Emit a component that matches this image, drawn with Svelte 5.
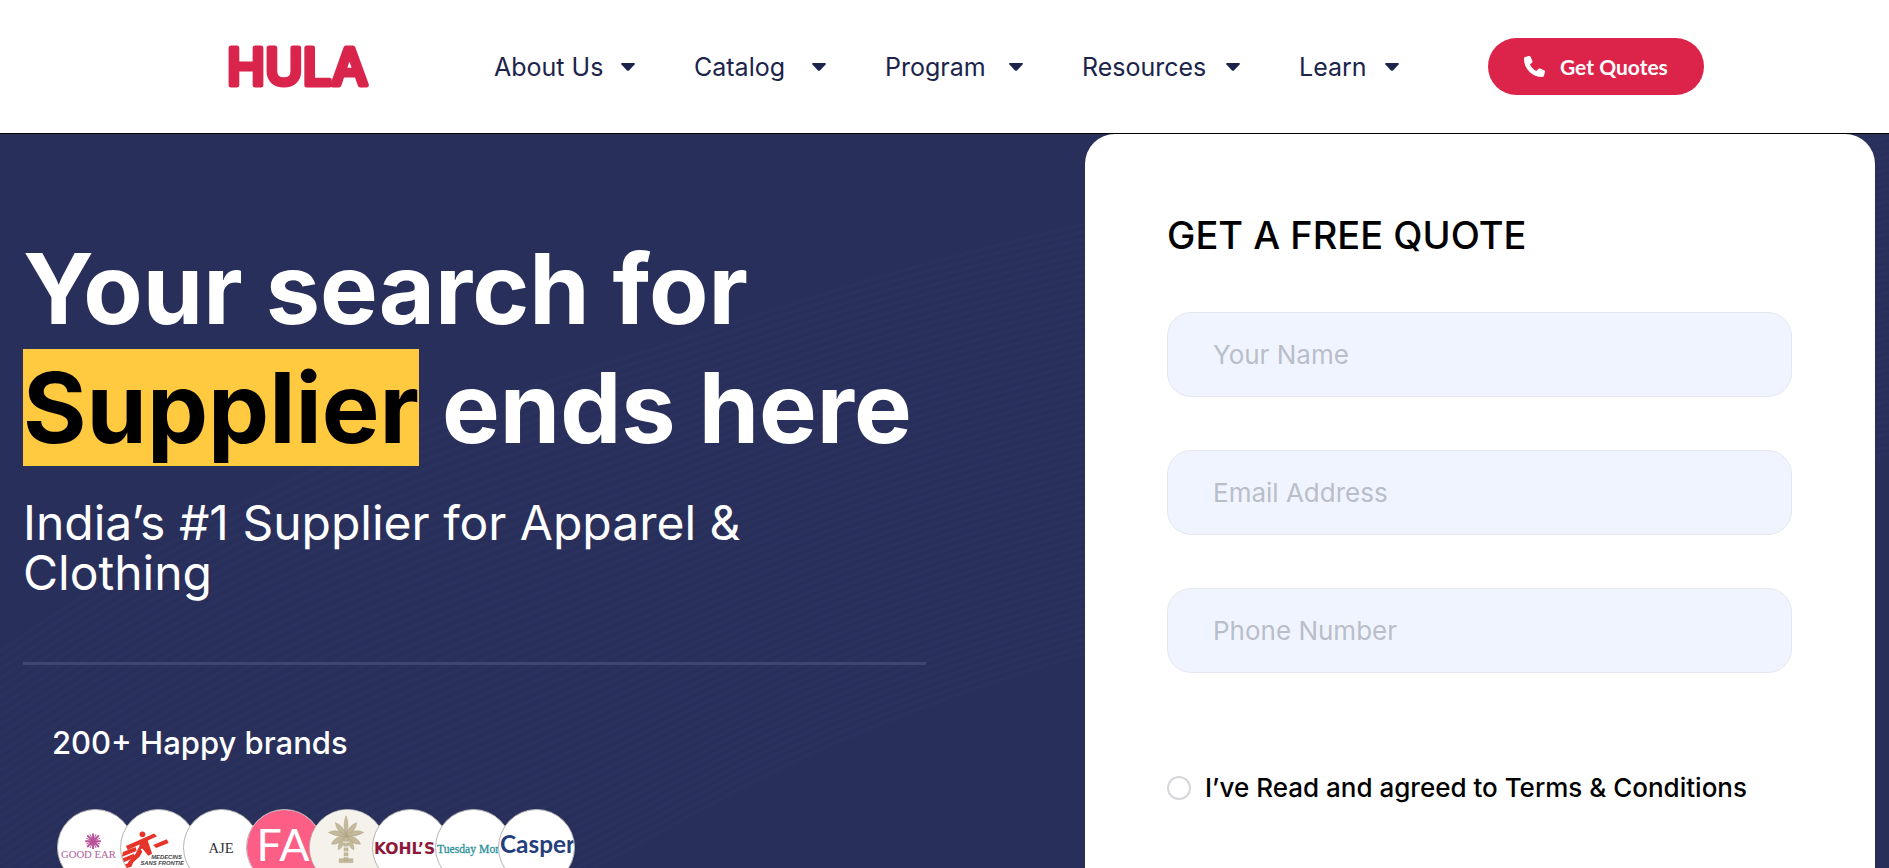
<script lang="ts">
  interface NavItem {
    label: string
    href: string
  }

  const nav: NavItem[] = [
    { label: 'About Us', href: '#about' },
    { label: 'Catalog', href: '#catalog' },
    { label: 'Program', href: '#program' },
    { label: 'Resources', href: '#resources' },
    { label: 'Learn', href: '#learn' },
  ]

  const brands = ['goodearth', 'msf', 'aje', 'fa', 'palm', 'kohls', 'tuesday', 'casper']

  // faint wave of lines behind the hero
  const waves = Array.from({ length: 60 }, (_, i) => {
    const d = i * 9
    return `M0 ${505 + d} C 260 ${330 + d}, 420 ${280 + d}, 640 ${214 + d * 0.9} S 960 ${90 + d * 0.8}, 1889 ${-60 + d * 0.7}`
  })

  let name = $state('')
  let email = $state('')
  let phone = $state('')
  let agreed = $state('')
</script>

<div class="page">
  <header>
    <a class="logo" href="#home" aria-label="HULA">
      <svg width="150" height="64" viewBox="0 0 150 64">
        <text x="2" y="50">HULA</text>
      </svg>
    </a>

    <nav>
      {#each nav as item}
        <a href={item.href}>
          {item.label}
          <svg width="16" height="10" viewBox="0 0 16 10">
            <path d="M2 1h12q1.6.2.6 1.6L9 8.4q-1 .9-2 0L1.400 2.600Q.4 1.200 2 1z" fill="currentColor" />
          </svg>
        </a>
      {/each}
    </nav>

    <button class="quotes" type="button">
      <svg width="21" height="21" viewBox="0 0 512 512">
        <path
          fill="currentColor"
          d="M164.900 24.600c-7.700-18.600-28-28.500-47.400-23.200l-88 24C12.100 30.200 0 46 0 64c0 247.400 200.600 448 448 448 18 0 33.800-12.100 38.600-29.500l24-88c5.300-19.400-4.600-39.700-23.200-47.400l-96-40c-16.300-6.800-35.200-2.100-46.300 11.600L304.700 368C234.300 334.700 177.300 277.700 144 207.300L193.300 167c13.700-11.200 18.400-30 11.600-46.300l-40-96z"
        />
      </svg>
      Get Quotes
    </button>
  </header>

  <main>
    <svg class="waves" viewBox="0 0 1889 734" preserveAspectRatio="none" aria-hidden="true">
      {#each waves as d}
        <path {d} />
      {/each}
    </svg>

    <section class="intro">
      <h1>Your search for<br /><mark>Supplier</mark> ends here</h1>
      <h2>India’s #1 Supplier for Apparel &amp; Clothing</h2>
      <hr />
      <p class="happy">200+ Happy brands</p>

      <div class="brands">
        {#each brands as brand}
          <svg class="brand" viewBox="0 0 77 77">
            {#if brand === 'goodearth'}
              <g stroke="#b8529a" stroke-width="2">
                <path d="M36 24v16M28 32h16M30 26l12 12M42 26L30 38" />
                <path d="M33 25l6 14M39 25l-6 14M29 29l14 6M29 35l14-6" stroke-width="1" />
              </g>
              <text x="3" y="49" font-family="Liberation Serif" font-size="11" fill="#b0609c">GOOD EAR</text>
            {:else if brand === 'msf'}
              <g fill="#e5352b">
                <path d="M5 37l29-13 3 3-30 14zM33 36l14-6 2 4-13 5zM2 43l13-5 1 4-15 6zM1 50l12-5 1 4-12 5zM4 56l9-4-2 6-6 2z" />
                <path d="M19 33l8-3 3 9 2 6-4 2-5-6-4 7-9 8-3-2 8-9 4-8z" />
              </g>
              <path d="M21 40l3 4-3 6-5 5" fill="none" stroke="#fff" stroke-width="2" />
              <circle cx="22" cy="25" r="3" fill="#e5352b" />
              <g font-family="Liberation Sans" font-size="6" font-weight="700" font-style="italic" fill="#444">
                <text x="31" y="50">MEDECINS</text>
                <text x="20" y="56">SANS FRONTIE</text>
              </g>
            {:else if brand === 'aje'}
              <text x="38" y="44" text-anchor="middle" font-family="Liberation Serif" font-size="15" fill="#333">AJE</text>
            {:else if brand === 'fa'}
              <rect width="77" height="77" fill="#fd5e86" />
              <text x="37" y="52" text-anchor="middle" font-family="Lato" font-size="46" fill="#fff">FA</text>
            {:else if brand === 'palm'}
              <rect width="77" height="77" fill="#f5f2ec" />
              <g fill="#c4ba9b" stroke="#aaa080" stroke-width="0.500">
                <path d="M37 27Q33 15 37 6Q41 15 37 27zM37 27Q27 22 26 13Q35 16 37 27zM37 27Q39 16 48 13Q47 22 37 27z" />
                <path d="M37 27Q27 28 19 23Q28 18 37 27zM37 27Q46 18 55 23Q47 28 37 27zM37 27Q31 36 22 35Q26 26 37 27zM37 27Q48 26 52 35Q43 36 37 27z" />
                <path d="M37 27Q36 37 29 41Q28 32 37 27zM37 27Q46 32 45 41Q38 37 37 27z" />
                <path d="M35 28h4v24h-4zM30 50h14v4H30z" />
              </g>
              <path d="M34 33h6M34 38h6M34 43h6M34 48h6" stroke="#f5f2ec" />
            {:else if brand === 'kohls'}
              <text x="1" y="45" font-family="DejaVu Sans" font-size="16" font-weight="700" fill="#8e1838">KOHL’S</text>
            {:else if brand === 'tuesday'}
              <text x="1" y="44" font-family="Liberation Serif" font-size="12" fill="#2b9199" stroke="#2b9199" stroke-width="0.300">Tuesday Morn</text>
            {:else}
              <text x="1" y="44" font-family="Lato" font-size="25" font-weight="700" fill="#263f7c">Casper</text>
            {/if}
          </svg>
        {/each}
      </div>
    </section>

    <form class="card" onsubmit={(e) => e.preventDefault()}>
      <h3>GET A FREE QUOTE</h3>
      <input type="text" aria-label="Your Name" placeholder="Your Name" bind:value={name} />
      <input type="email" aria-label="Email Address" placeholder="Email Address" bind:value={email} />
      <input type="tel" aria-label="Phone Number" placeholder="Phone Number" bind:value={phone} />
      <label>
        <input type="radio" name="terms" value="yes" bind:group={agreed} />
        I’ve Read and agreed to Terms &amp; Conditions
      </label>
    </form>
  </main>
</div>

<style>
  :global(body) {
    margin: 0;
  }

  .page {
    display: flex;
    flex-direction: column;
    height: 100vh;
    overflow: hidden;
    font-family: Inter, sans-serif;
    background: #fff;
  }

  header {
    display: flex;
    align-items: center;
    flex-shrink: 0;
    height: 133px;
    padding-left: 225px;
    border-bottom: 1px solid #000;
  }

  .logo {
    display: flex;
    margin-right: 119px;
  }

  .logo text {
    font-size: 51px;
    font-weight: 500;
    fill: #d9244c;
    stroke: #d9244c;
    stroke-width: 5px;
    stroke-linejoin: round;
  }

  nav {
    display: grid;
    grid-template-columns: 142px 133px 139px 159px 101px;
    column-gap: 58px;
    margin-right: 88px;
  }

  nav a {
    display: flex;
    align-items: center;
    justify-content: space-between;
    font-size: 25px;
    line-height: 32px;
    white-space: nowrap;
    color: #1c244b;
    text-decoration: none;
  }

  .quotes {
    display: flex;
    align-items: center;
    gap: 15px;
    height: 57px;
    padding: 0 36px;
    border: 0;
    border-radius: 29px;
    background: #dc244b;
    color: #fff;
    font-family: Lato, sans-serif;
    font-size: 21px;
    font-weight: 700;
    white-space: nowrap;
    cursor: pointer;
  }

  main {
    position: relative;
    display: grid;
    grid-template-columns: 903fr 790fr;
    column-gap: 159px;
    flex: 1;
    padding: 0 14px 0 23px;
    background: #292f5b;
  }

  .waves {
    position: absolute;
    inset: 0;
    width: 100%;
    height: 100%;
  }

  .waves path {
    fill: none;
    stroke: #4a5288;
    stroke-width: 4;
    opacity: 0.06;
  }

  .intro,
  .card {
    position: relative;
    min-width: 0;
  }

  h1 {
    margin: 95px 0 0;
    font-size: 97px;
    font-weight: 700;
    line-height: 119px;
    white-space: nowrap;
    color: #fff;
  }

  mark {
    background: #ffc940;
    color: #000;
  }

  h2 {
    margin: 31px 0 0;
    font-size: 48px;
    font-weight: 400;
    line-height: 50px;
    color: #fff;
  }

  hr {
    height: 3px;
    margin: 64px 0 0;
    border: 0;
    background: #40466f;
  }

  .happy {
    margin: 58px 0 0 29px;
    font-size: 31px;
    font-weight: 500;
    line-height: 40px;
    color: #fff;
  }

  .brands {
    display: flex;
    margin: 46px 0 0 34px;
  }

  .brand {
    flex-shrink: 0;
    width: 77px;
    height: 77px;
    margin-right: -14px;
    box-sizing: border-box;
    border: 1px solid #b5b5b5;
    border-radius: 50%;
    background: #fff;
  }

  .card {
    padding: 79px 83px 0 82px;
    border-radius: 30px 30px 0 0;
    background: #fff;
  }

  h3 {
    margin: 0 0 55px;
    font-size: 38px;
    font-weight: 500;
    line-height: 44px;
    color: #000;
  }

  .card > input {
    display: block;
    box-sizing: border-box;
    width: 100%;
    height: 85px;
    margin-bottom: 53px;
    padding: 0 45px;
    border: 1px solid #e4e8ee;
    border-radius: 24px;
    background: #f0f4ff;
    font-family: inherit;
    font-size: 26px;
    font-weight: 400;
    color: #000;
  }

  .card > input::placeholder {
    color: #b9bec9;
    opacity: 1;
  }

  label {
    display: flex;
    align-items: center;
    gap: 14px;
    margin-top: 99px;
    font-size: 26px;
    font-weight: 500;
    line-height: 32px;
    white-space: nowrap;
    color: #000;
  }

  label input {
    appearance: none;
    box-sizing: border-box;
    width: 24px;
    height: 24px;
    margin: 0;
    border: 2px solid #d5d7da;
    border-radius: 50%;
    background: #fff;
  }

  label input:checked {
    background: #dc244b;
  }
</style>
